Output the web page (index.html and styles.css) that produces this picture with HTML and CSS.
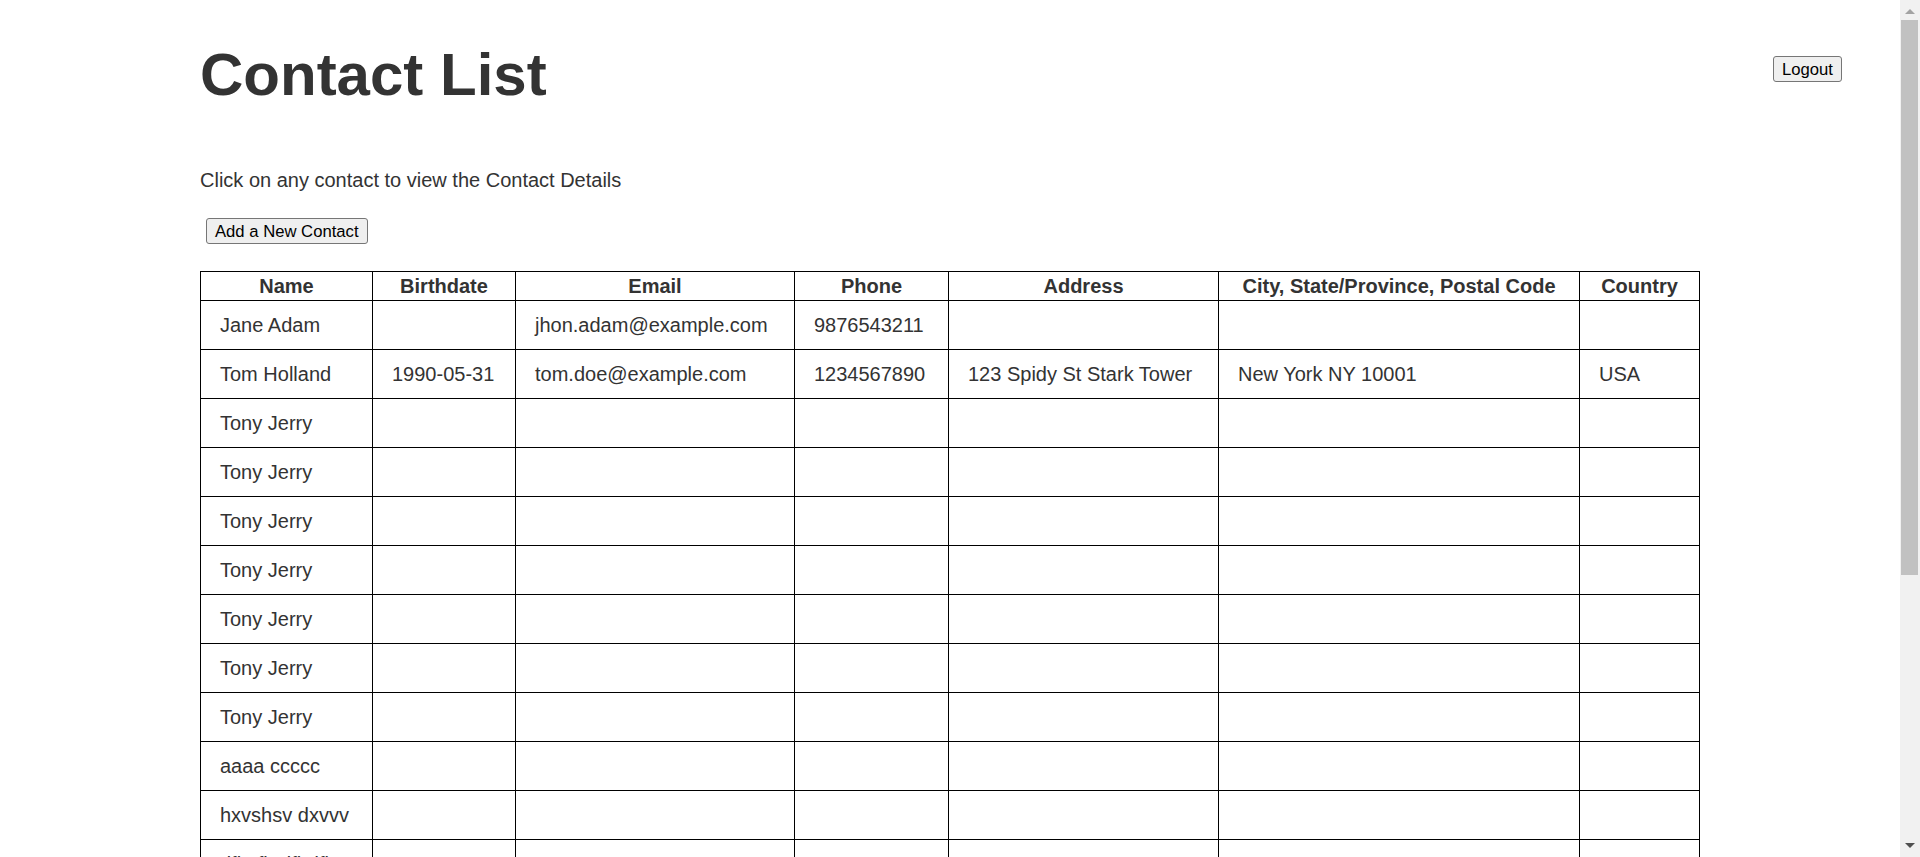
FILE: index.html
```html
<!DOCTYPE html>
<html lang="en">
<head>
<meta charset="utf-8">
<title>My Contacts</title>
<link rel="stylesheet" href="styles.css">
</head>
<body>
<div class="page">
  <header class="top">
    <h1 class="title">Contact List</h1>
    <button class="btn logout" type="button">Logout</button>
  </header>
  <p class="hint">Click on any contact to view the Contact Details</p>
  <div class="actions">
    <button class="btn" type="button">Add a New Contact</button>
  </div>
  <table class="contacts">
    <thead>
      <tr>
        <th class="c-name">Name</th>
        <th class="c-birth">Birthdate</th>
        <th class="c-email">Email</th>
        <th class="c-phone">Phone</th>
        <th class="c-addr">Address</th>
        <th class="c-city">City, State/Province, Postal Code</th>
        <th class="c-country">Country</th>
      </tr>
    </thead>
    <tbody>
      <tr><td>Jane Adam</td><td></td><td>jhon.adam@example.com</td><td>9876543211</td><td></td><td></td><td></td></tr>
      <tr><td>Tom Holland</td><td>1990-05-31</td><td>tom.doe@example.com</td><td>1234567890</td><td>123 Spidy St Stark Tower</td><td>New York NY 10001</td><td>USA</td></tr>
      <tr><td>Tony Jerry</td><td></td><td></td><td></td><td></td><td></td><td></td></tr>
      <tr><td>Tony Jerry</td><td></td><td></td><td></td><td></td><td></td><td></td></tr>
      <tr><td>Tony Jerry</td><td></td><td></td><td></td><td></td><td></td><td></td></tr>
      <tr><td>Tony Jerry</td><td></td><td></td><td></td><td></td><td></td><td></td></tr>
      <tr><td>Tony Jerry</td><td></td><td></td><td></td><td></td><td></td><td></td></tr>
      <tr><td>Tony Jerry</td><td></td><td></td><td></td><td></td><td></td><td></td></tr>
      <tr><td>Tony Jerry</td><td></td><td></td><td></td><td></td><td></td><td></td></tr>
      <tr><td>aaaa ccccc</td><td></td><td></td><td></td><td></td><td></td><td></td></tr>
      <tr><td>hxvshsv dxvvv</td><td></td><td></td><td></td><td></td><td></td><td></td></tr>
      <tr><td>dfbsfb dfbdfb</td><td></td><td></td><td></td><td></td><td></td><td></td></tr>
    </tbody>
  </table>
</div>
<div class="scrollbar" aria-hidden="true">
  <div class="sb-btn"><span class="arrow-up"></span></div>
  <div class="sb-track"><div class="sb-thumb"></div></div>
  <div class="sb-btn"><span class="arrow-down"></span></div>
</div>
</body>
</html>
```

FILE: styles.css
```css
html {
  background: #ffffff;
}

body {
  margin: 0;
  font-family: "Liberation Sans", Arial, Helvetica, sans-serif;
  color: #333333;
}

.page {
  padding: 40px 78px 376px 200px;
}

.top {
  display: flex;
  justify-content: space-between;
  align-items: flex-start;
}

.title {
  margin: 0;
  font-size: 60px;
  line-height: 69px;
  font-weight: bold;
  color: #333333;
}

.btn {
  font-family: "Liberation Sans", Arial, Helvetica, sans-serif;
  font-size: 16.67px;
  line-height: 19px;
  color: #000000;
  background: #efefef;
  border: 1px solid #767676;
  border-radius: 3px;
  height: 26px;
  padding: 0 8px;
  margin: 0;
}

.logout {
  margin-top: 16px;
}

.hint {
  margin: 60px 0 0;
  font-size: 20px;
  line-height: 23px;
}

.actions {
  margin-top: 26px;
  padding-left: 6px;
  display: flex;
}

.contacts {
  margin-top: 27px;
  width: 1500px;
  table-layout: fixed;
  border-collapse: collapse;
  font-size: 20px;
  line-height: 23px;
  color: #333333;
}

.contacts th,
.contacts td {
  border: 1px solid #000000;
}

.contacts th {
  padding: 2.5px 0;
  font-weight: bold;
  text-align: center;
  white-space: nowrap;
}

.contacts td {
  padding: 12.5px 19px;
  text-align: left;
  white-space: nowrap;
  height: 23px;
}

.c-name { width: 171px; }
.c-birth { width: 142px; }
.c-email { width: 278px; }
.c-phone { width: 153px; }
.c-addr { width: 269px; }
.c-city { width: 360px; }
.c-country { width: 119px; }

/* window scrollbar */
.scrollbar {
  position: fixed;
  top: 0;
  right: 0;
  width: 20px;
  height: 100vh;
  background: #f1f1f1;
  display: flex;
  flex-direction: column;
}

.sb-btn {
  height: 20px;
  flex: none;
  display: flex;
  align-items: center;
  justify-content: center;
}

.sb-track {
  flex: 1;
  display: flex;
  flex-direction: column;
}

.sb-thumb {
  height: 555px;
  margin: 0 2px 0 1px;
  background: #c1c1c1;
}

.arrow-up {
  width: 0;
  height: 0;
  border-left: 5px solid transparent;
  border-right: 5px solid transparent;
  border-bottom: 5px solid #a3a3a3;
  margin-top: 2px;
}

.arrow-down {
  width: 0;
  height: 0;
  border-left: 5px solid transparent;
  border-right: 5px solid transparent;
  border-top: 5px solid #505050;
  margin-bottom: 3px;
}
```
